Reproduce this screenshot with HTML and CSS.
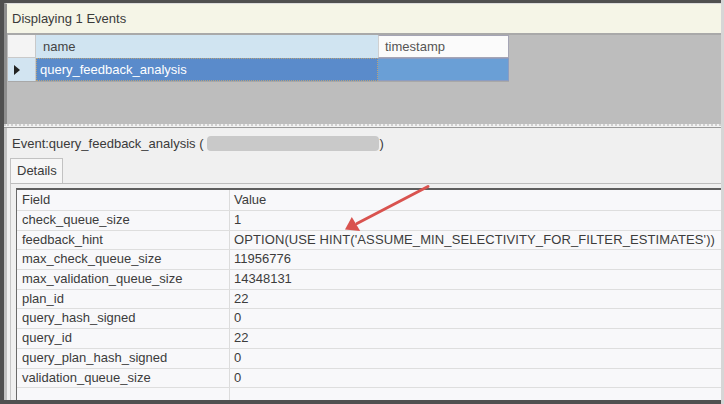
FILE: index.html
```html
<!DOCTYPE html>
<html>
<head>
<meta charset="utf-8">
<link rel="stylesheet" href="styles.css">
</head>
<body>
<div class="window">
  <div class="top">
    <div class="caption">Displaying 1 Events</div>
    <div class="grid">
      <div class="grow ghead">
        <div class="sel sel-head"></div>
        <div class="cell c-name h-name">name</div>
        <div class="cell c-ts h-ts">timestamp</div>
      </div>
      <div class="grow gdata">
        <div class="sel sel-row"><span class="tri"></span></div>
        <div class="cell c-name d-name">query_feedback_analysis</div>
        <div class="cell c-ts d-ts"></div>
      </div>
    </div>
  </div>
  <div class="splitter"></div>
  <div class="bottom">
    <div class="event-line">Event:query_feedback_analysis (<span class="redact"></span>)</div>
    <div class="tabs"><div class="tab">Details</div></div>
    <div class="tabpage">
      <div class="table">
        <div class="trow thead"><div class="f">Field</div><div class="v">Value</div></div>
        <div class="trow"><div class="f">check_queue_size</div><div class="v">1</div></div>
        <div class="trow"><div class="f">feedback_hint</div><div class="v hint">OPTION(USE HINT('ASSUME_MIN_SELECTIVITY_FOR_FILTER_ESTIMATES'))</div></div>
        <div class="trow"><div class="f">max_check_queue_size</div><div class="v">11956776</div></div>
        <div class="trow"><div class="f">max_validation_queue_size</div><div class="v">14348131</div></div>
        <div class="trow"><div class="f">plan_id</div><div class="v">22</div></div>
        <div class="trow"><div class="f">query_hash_signed</div><div class="v">0</div></div>
        <div class="trow"><div class="f">query_id</div><div class="v">22</div></div>
        <div class="trow"><div class="f">query_plan_hash_signed</div><div class="v">0</div></div>
        <div class="trow"><div class="f">validation_queue_size</div><div class="v">0</div></div>
        <div class="trow tfill"><div class="f"></div><div class="v"></div></div>
      </div>
    </div>
  </div>
  <svg class="arrow" width="724" height="404" viewBox="0 0 724 404">
    <line x1="428" y1="186.5" x2="357" y2="223.5" stroke="#d9534f" stroke-width="3" stroke-linecap="round"/>
    <polygon points="345,229.5 351.8,216.9 360.2,231" fill="#d9534f"/>
  </svg>
</div>
</body>
</html>
```
FILE: styles.css
```css
* { box-sizing: border-box; }
html, body { margin: 0; padding: 0; }
body {
  width: 724px;
  height: 404px;
  overflow: hidden;
  font-family: "Liberation Sans", Arial, sans-serif;
  font-size: 13px;
  color: #3c3c3c;
}
.window {
  position: relative;
  width: 724px;
  height: 404px;
  background: #505050;
  padding: 3px 0 4px 4px;
  border-right: 3px solid #d6d6d6;
  display: flex;
  flex-direction: column;
}
.top {
  height: 121px;
  background: #bdbdbd;
  border-top: 1px solid #dcdcdc;
  border-left: 3px solid #8e8e8e;
  display: flex;
  flex-direction: column;
}
.caption {
  height: 31px;
  background: #f5f5e7;
  padding-left: 5px;
  line-height: 29px;
  color: #3a3a3a;
  border-bottom: 2px solid #a9a9a9;
}
.grid {
  margin-left: 1px;
  display: flex;
  flex-direction: column;
}
.grow { display: flex; }
.ghead { height: 23px; }
.gdata { height: 24px; border-bottom: 1px solid #a8a8a8; width: 501px; }
.sel {
  width: 28px;
  flex: none;
}
.sel-head { background: #f4f4f4; border-right: 1px solid #c9c9c9; border-bottom: 1px solid #c9c9c9; }
.sel-row { background: #d2e4f1; display: flex; align-items: center; padding-left: 6px; border-right: 1px solid #c9c9c9; }
.tri {
  width: 0; height: 0;
  border-top: 5px solid transparent;
  border-bottom: 5px solid transparent;
  border-left: 6px solid #222;
}
.cell { flex: none; white-space: nowrap; }
.c-name { width: 342px; }
.c-ts { width: 131px; }
.h-name { background: #d0e4f1; padding-left: 7px; line-height: 23px; color: #444; }
.h-ts { background: #fbfbfb; padding-left: 6px; line-height: 22px; border: 1px solid #a5a5b5; border-left: 1px solid #d0d0d0; color: #555; }
.d-name { background: #5a8bcb; color: #fff; padding-left: 3px; line-height: 22px; border: 1px dotted #b9a27a; }
.d-ts { background: #6a9fd6; border: 1px solid #8c9cc0; border-left: none; }
.splitter {
  height: 4px;
  background: #f2f2f2;
  border-top: 2px dotted #cfcfcf;
  border-bottom: 1px solid #9a9a9a;
}
.bottom {
  flex: 1;
  background: #f0f0f0;
  border-left: 3px solid #c2c2c2;
  display: flex;
  flex-direction: column;
  min-height: 0;
}
.event-line {
  height: 30px;
  padding-left: 5px;
  display: flex;
  align-items: center;
  white-space: nowrap;
  color: #3a3a3a;
}
.redact {
  display: inline-block;
  width: 172px;
  height: 15px;
  margin-left: 3px;
  margin-right: 1px;
  border-radius: 4px;
  background: #c9c9c9;
}
.tabs { height: 25px; padding-left: 3px; display: flex; }
.tab {
  width: 53px;
  height: 25px;
  border: 1px solid #c2c2c2;
  border-bottom: none;
  background: #f6f6f6;
  padding-left: 6px;
  line-height: 24px;
  color: #3a3a3a;
}
.tabpage {
  flex: 1;
  margin-left: 3px;
  border-top: 1px solid #bdbdbd;
  border-left: 1px solid #c8c8c8;
  padding: 4px 0 0 5px;
  display: flex;
  flex-direction: column;
  min-height: 0;
}
.table {
  flex: 1;
  background: #f8f8fa;
  border-top: 2px solid #5e5e5e;
  border-left: 1px solid #6a6a6a;
  display: flex;
  flex-direction: column;
  overflow: hidden;
}
.trow {
  display: flex;
  height: 19.7px;
  flex: none;
  border-bottom: 1px solid #dedede;
  line-height: 18px;
}
.thead { height: 21px; line-height: 20px; }
.tfill { flex: 1; border-bottom: none; }
.f { width: 213px; padding-left: 5px; border-right: 1px solid #dcdcdc; white-space: nowrap; }
.v { padding-left: 4px; white-space: nowrap; }
.hint { letter-spacing: 0.1px; }
.arrow {
  position: absolute;
  left: 0;
  top: 0;
  pointer-events: none;
}
```
